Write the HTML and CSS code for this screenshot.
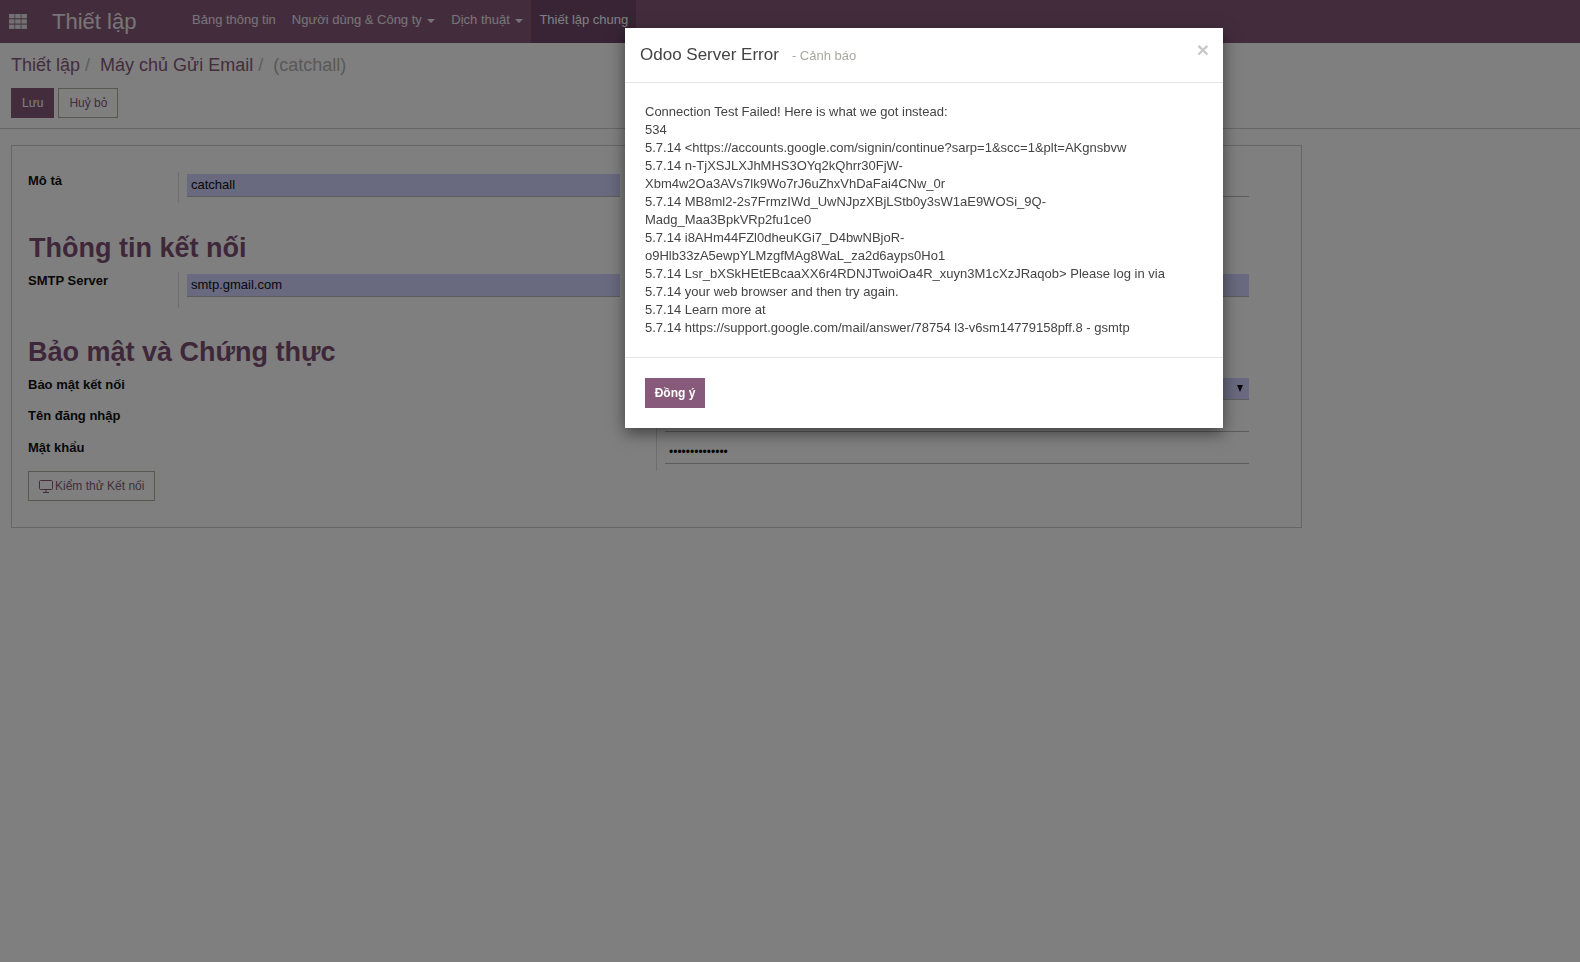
FILE: index.html
```html
<!DOCTYPE html>
<html lang="vi">
<head>
    <meta charset="UTF-8">
    <title>Máy chủ Gửi Email - Odoo</title>
    <link rel="stylesheet" href="styles.css">
</head>
<body>
    <nav class="navbar">
        <svg class="apps-icon" width="18" height="15" viewBox="0 0 18 15">
            <rect x="0" y="0" width="5.5" height="4.3"/><rect x="6.2" y="0" width="5.5" height="4.3"/><rect x="12.4" y="0" width="5.5" height="4.3"/>
            <rect x="0" y="5.3" width="5.5" height="4.3"/><rect x="6.2" y="5.3" width="5.5" height="4.3"/><rect x="12.4" y="5.3" width="5.5" height="4.3"/>
            <rect x="0" y="10.6" width="5.5" height="4.3"/><rect x="6.2" y="10.6" width="5.5" height="4.3"/><rect x="12.4" y="10.6" width="5.5" height="4.3"/>
        </svg>
        <span class="brand">Thiết lập</span>
        <ul class="nav-menu">
            <li>Bảng thông tin</li>
            <li>Người dùng &amp; Công ty<i class="caret"></i></li>
            <li>Dịch thuật<i class="caret"></i></li>
            <li class="active">Thiết lập chung</li>
        </ul>
    </nav>

    <div class="control-panel">
        <ol class="breadcrumb">
            <li>Thiết lập<span class="sep">/</span></li>
            <li>Máy chủ Gửi Email<span class="sep">/</span></li>
            <li class="current">(catchall)</li>
        </ol>
        <div class="cp-buttons">
            <button class="btn btn-primary">Lưu</button>
            <button class="btn btn-default">Huỷ bỏ</button>
        </div>
    </div>

    <div class="sheet">
        <div class="two-groups row-first">
            <div class="field-row">
                <div class="label">Mô tả</div>
                <div class="value"><div class="input required">catchall</div></div>
            </div>
            <div class="value"><div class="input"></div></div>
        </div>

        <h2 class="group-title title-connect">Thông tin kết nối</h2>
        <div class="two-groups row-second">
            <div class="field-row">
                <div class="label">SMTP Server</div>
                <div class="value"><div class="input required">smtp.gmail.com</div></div>
            </div>
            <div class="value"><div class="input required"></div></div>
        </div>

        <h2 class="group-title title-security">Bảo mật và Chứng thực</h2>
        <div class="security-group">
            <div class="label">Bảo mật kết nối</div>
            <div class="value"><div class="select required"><i class="select-arrow"></i></div></div>
            <div class="label">Tên đăng nhập</div>
            <div class="value"><div class="input plain"></div></div>
            <div class="label">Mật khẩu</div>
            <div class="value value-last"><div class="input plain password">••••••••••••••</div></div>
        </div>
        <button class="btn btn-test">
            <svg width="14" height="13" viewBox="0 0 14 13" fill="none" stroke="currentColor">
                <rect x="0.5" y="0.5" width="13" height="9" rx="1"/>
                <path d="M7 9.5v2.5M4 12.5h6"/>
            </svg>Kiểm thử Kết nối
        </button>
    </div>

    <div class="backdrop"></div>

    <div class="modal">
        <header class="modal-header">
            <h4 class="modal-title">Odoo Server Error</h4>
            <span class="modal-sub">- Cảnh báo</span>
            <span class="modal-close">×</span>
        </header>
        <div class="modal-body">
            <p>Connection Test Failed! Here is what we got instead:</p>
            <p>534</p>
            <p>5.7.14 &lt;https://accounts.google.com/signin/continue?sarp=1&amp;scc=1&amp;plt=AKgnsbvw</p>
            <p>5.7.14 n-TjXSJLXJhMHS3OYq2kQhrr30FjW-</p>
            <p>Xbm4w2Oa3AVs7lk9Wo7rJ6uZhxVhDaFai4CNw_0r</p>
            <p>5.7.14 MB8ml2-2s7FrmzIWd_UwNJpzXBjLStb0y3sW1aE9WOSi_9Q-</p>
            <p>Madg_Maa3BpkVRp2fu1ce0</p>
            <p>5.7.14 i8AHm44FZl0dheuKGi7_D4bwNBjoR-</p>
            <p>o9Hlb33zA5ewpYLMzgfMAg8WaL_za2d6ayps0Ho1</p>
            <p>5.7.14 Lsr_bXSkHEtEBcaaXX6r4RDNJTwoiOa4R_xuyn3M1cXzJRaqob&gt; Please log in via</p>
            <p>5.7.14 your web browser and then try again.</p>
            <p>5.7.14 Learn more at</p>
            <p>5.7.14 https://support.google.com/mail/answer/78754 l3-v6sm14779158pff.8 - gsmtp</p>
        </div>
        <footer class="modal-footer">
            <button class="btn btn-ok">Đồng ý</button>
        </footer>
    </div>
</body>
</html>
```

FILE: styles.css
```css
* {
    box-sizing: border-box;
}

html, body {
    height: 100%;
}

body {
    margin: 0;
    background: #fff;
    color: #333;
    font-family: "Liberation Sans", Arial, sans-serif;
    font-size: 12px;
    overflow: hidden;
}

/* top bar */
.navbar {
    display: flex;
    align-items: center;
    height: 43px;
    background: #875a7b;
    color: #fff;
}

.apps-icon {
    margin-left: 9px;
    fill: #e4e4e4;
}

.brand {
    margin-left: 25px;
    width: 132px;
    font-size: 22px;
    color: #f0e8ee;
}

.nav-menu {
    display: flex;
    align-self: stretch;
    margin: 0;
    padding: 0;
    list-style: none;
}

.nav-menu li {
    display: flex;
    align-items: center;
    padding: 0 8px 4px;
    font-size: 13px;
    color: #f0e8ee;
}

.nav-menu li.active {
    background: #71486a;
    color: #fff;
}

.caret {
    margin-left: 5px;
    margin-right: 0.5px;
    margin-top: 3px;
    border-top: 4px solid currentColor;
    border-left: 4px solid transparent;
    border-right: 4px solid transparent;
}

/* breadcrumb and buttons */
.control-panel {
    height: 86px;
    padding: 11px 11px 0;
    border-bottom: 1px solid #ccc;
}

.breadcrumb {
    display: flex;
    gap: 10px;
    margin: 0;
    padding: 0;
    height: 24px;
    list-style: none;
    font-size: 18px;
    line-height: 22px;
    color: #875a7b;
}

.breadcrumb .sep {
    margin-left: 5px;
    color: #bbb;
}

.breadcrumb .current {
    color: #b5b0b2;
}

.cp-buttons {
    display: flex;
    gap: 4px;
    margin-top: 10px;
}

.btn {
    height: 30px;
    padding: 0 10px;
    border: 1px solid transparent;
    border-radius: 0;
    font-family: inherit;
    font-size: 12px;
}

.btn-primary {
    background: #875a7b;
    color: #fff;
}

.btn-default {
    background: #fff;
    border-color: #b0b0a4;
    color: #875a7b;
}

/* form sheet */
.sheet {
    width: 1291px;
    margin: 16px 0 0 11px;
    padding: 26px 52px 26px 16px;
    border: 1px solid #ccc;
}

.two-groups {
    display: grid;
    grid-template-columns: 628px 593px;
}

.row-first {
    height: 31px;
}

.row-second {
    height: 36px;
}

.field-row {
    display: grid;
    grid-template-columns: 150px 442px;
}

.label {
    padding-top: 1px;
    font-size: 13px;
    font-weight: bold;
    line-height: 16px;
    color: #111;
}

.value {
    padding-left: 8px;
    border-left: 1px solid #ddd;
}

.input {
    height: 23px;
    margin-top: 2px;
    padding-left: 4px;
    border-bottom: 1px solid #bbb;
    font-size: 13px;
    line-height: 21px;
    color: #111;
}

.required {
    background: #d2d2ff;
}

.group-title {
    margin: 0;
    font-size: 27px;
    font-weight: bold;
    line-height: 34px;
    color: #7f4f74;
}

.title-connect {
    margin-top: 28px;
    margin-bottom: 7px;
    padding-left: 1px;
}

.title-security {
    margin-top: 27px;
}

.security-group {
    display: grid;
    grid-template-columns: 628px 593px;
    grid-template-rows: 31px 32px 39px;
}

.security-group .label {
    line-height: 30px;
}

.select {
    position: relative;
    height: 22px;
    margin-top: 9px;
    border-bottom: 1px solid #bbb;
}

.select-arrow {
    position: absolute;
    right: 6px;
    top: 7px;
    border-top: 7px solid #111;
    border-left: 3.5px solid transparent;
    border-right: 3.5px solid transparent;
}

.input.plain {
    height: 32px;
    margin-top: 0;
    padding-top: 10px;
}

.password {
    font-size: 12px;
}

.btn-test {
    display: flex;
    align-items: center;
    gap: 2px;
    width: 127px;
    padding: 0 0 0 10px;
    white-space: nowrap;
    background: #fff;
    border-color: #b0b0a4;
    color: #875a7b;
}

/* dialog */
.backdrop {
    position: fixed;
    inset: 0;
    background: rgba(0, 0, 0, 0.5);
}

.modal {
    position: absolute;
    left: 625px;
    top: 28px;
    width: 598px;
    height: 400px;
    background: #fff;
    box-shadow: 0 5px 15px rgba(0, 0, 0, 0.5);
}

.modal-header {
    position: relative;
    display: flex;
    align-items: baseline;
    height: 55px;
    padding: 17px 15px 0;
    border-bottom: 1px solid #e5e5e5;
}

.modal-title {
    margin: 0;
    font-size: 17px;
    font-weight: normal;
    color: #444;
}

.modal-sub {
    margin-left: 13px;
    font-size: 13px;
    color: #aaa89f;
}

.modal-close {
    position: absolute;
    right: 14px;
    top: 10px;
    font-size: 21px;
    font-weight: bold;
    color: #c8c8c8;
}

.modal-body {
    height: 275px;
    padding: 20px 20px 0;
    border-bottom: 1px solid #e5e5e5;
    font-size: 13px;
    line-height: 18px;
    color: #444;
}

.modal-body p {
    margin: 0;
}

.modal-footer {
    padding: 20px;
}

.btn-ok {
    width: 60px;
    padding: 0;
    background: #875a7b;
    color: #fff;
    font-weight: bold;
}
```
